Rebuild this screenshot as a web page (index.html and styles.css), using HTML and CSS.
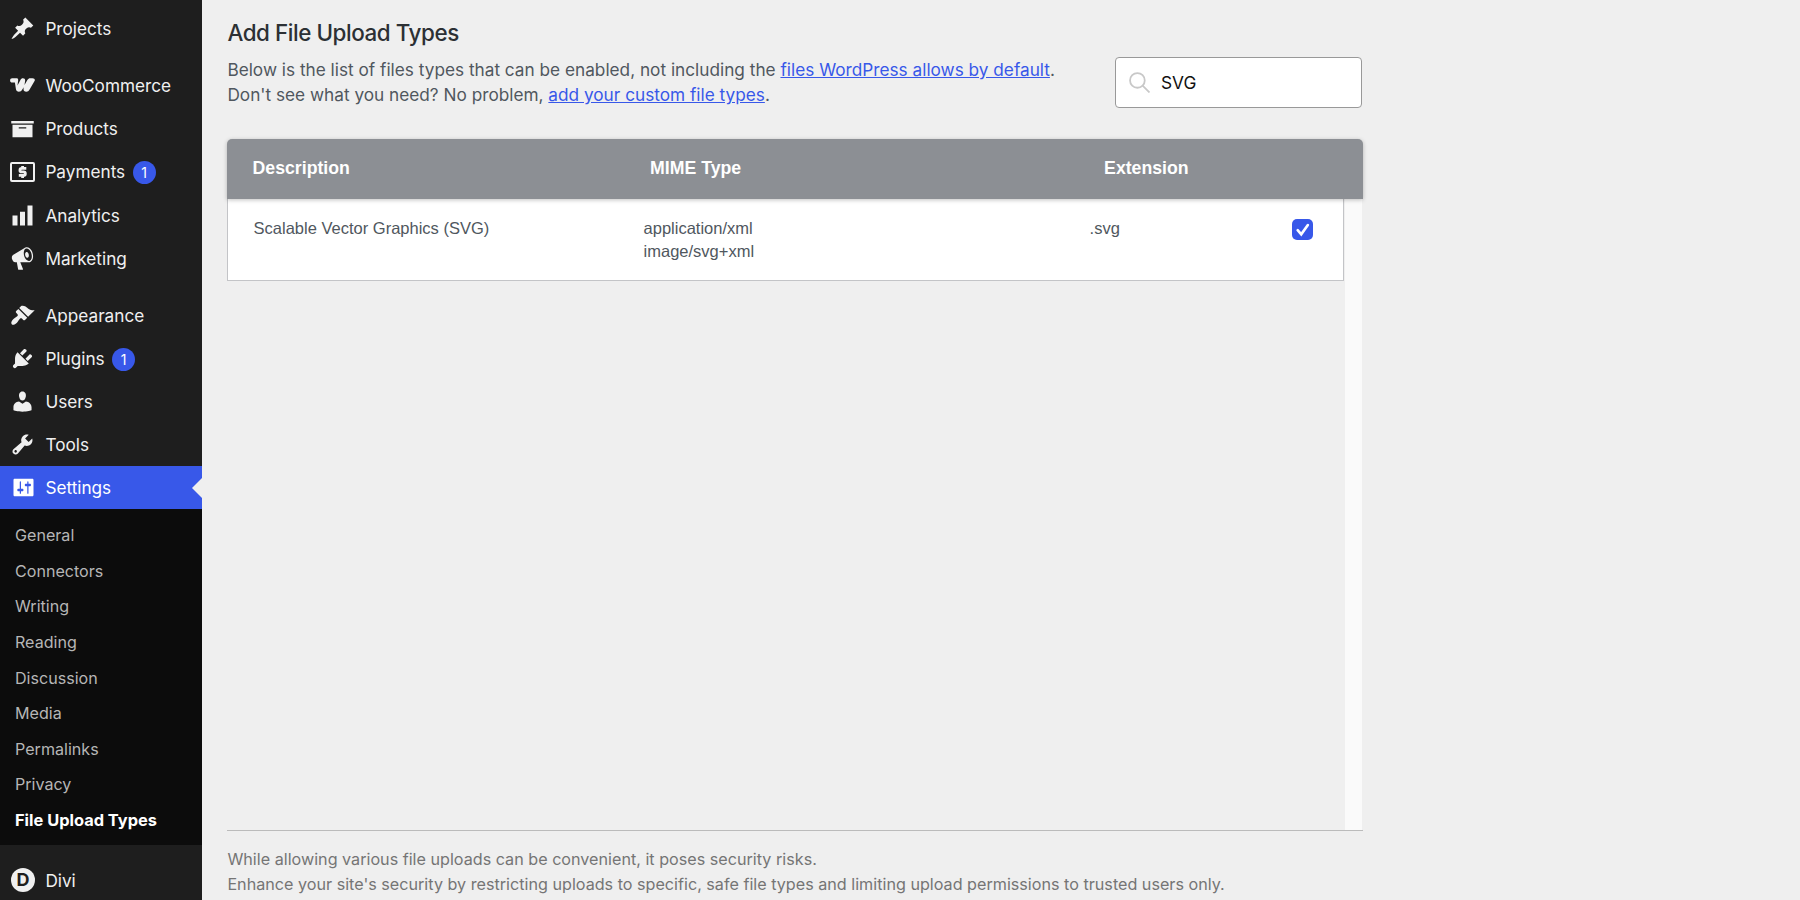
FILE: index.html
```html
<!DOCTYPE html>
<html lang="en">
<head>
    <meta charset="UTF-8">
    <title>Add File Upload Types</title>
    <link rel="stylesheet" href="styles.css">
</head>
<body>
    <div class="wrapper">
        <nav class="sidebar">
            <ul class="menu">
                <li><a href="#"><svg class="icon" viewBox="0 0 20 20"><path d="M10.44 3.02l1.82-1.82 6.36 6.35-1.83 1.82c-1.05-.68-2.48-.57-3.41.36l-.75.75c-.92.93-1.04 2.35-.35 3.41l-1.83 1.82-2.41-2.41-2.8 2.79c-.42.42-3.38 2.71-3.8 2.29s1.86-3.39 2.28-3.81l2.79-2.79L4.1 9.36l1.83-1.82c1.05.69 2.48.57 3.4-.36l.75-.75c.93-.92 1.05-2.35.36-3.41z"/></svg>Projects</a></li>
                <li class="separator"></li>
                <li><a href="#"><svg class="icon icon-woo" viewBox="0 0 25 14"><path d="M2.2.2h4.300c1.500 0 1.900 1 1.600 2.500L7.500 7.500l2.800-5.300C11 .8 11.800.2 12.900.2c1.800 0 2.500 1.200 2.200 2.900l-.6 3.900 3-5.200C18.200.7 19 .2 20.200.2h2.300c2.100 0 2.900 1.400 1.900 3.100l-4.800 8.200c-.9 1.500-1.900 2.200-3.300 2.200-1.900 0-2.900-1.200-2.800-3l.1-1.500-1.300 2.300c-.9 1.500-1.900 2.200-3.400 2.200-1.600 0-2.700-.9-3-2.700L4.900 4.600H2.300C.9 4.600.1 3.700.1 2.400.1 1.100.9.200 2.200.2z"/></svg>WooCommerce</a></li>
                <li><a href="#"><svg class="icon" viewBox="0 0 20 20"><path d="M19 4v2H1V4h18zM2 7h16v10H2V7zm11 3V9H7v1h6z"/></svg>Products</a></li>
                <li><a href="#"><svg class="icon icon-pay" viewBox="0 0 25 20"><path fill-rule="evenodd" d="M2 0h21a2 2 0 0 1 2 2v16a2 2 0 0 1-2 2H2a2 2 0 0 1-2-2V2a2 2 0 0 1 2-2zm0 2v16h21V2z"/><path class="dollar" d="M16.300 6.400h-4.600a1.700 1.700 0 0 0 0 3.500h1.900a1.700 1.700 0 0 1 0 3.500H8.800M12.600 4v2.500M12.600 13.500V16"/></svg>Payments<span class="badge">1</span></a></li>
                <li><a href="#"><svg class="icon" viewBox="0 0 20 20"><path d="M18 18V2h-4v16h4zm-6 0V7H8v11h4zm-6 0v-8H2v8h4z"/></svg>Analytics</a></li>
                <li><a href="#"><svg class="icon" viewBox="0 0 20 20"><path d="M18.150 5.940c.46 1.620.38 3.220-.02 4.480-.42 1.280-1.260 2.180-2.300 2.480-.16.06-.26.06-.4.06-.06.02-.12.02-.18.02-.06.02-.14.02-.22.02h-6.800l2.220 5.500c.02.14-.06.26-.14.34-.08.1-.24.16-.34.16H6.950c-.1 0-.26-.06-.34-.16-.08-.08-.16-.2-.14-.34l-1-5.500H4.250l-.02-.02c-.5.06-1.080-.18-1.540-.62s-.88-1.080-1.060-1.880c-.24-.8-.2-1.560-.02-2.200.18-.62.58-1.080 1.060-1.300l.02-.02 9-5.400c.1-.06.18-.1.24-.16.06-.04.14-.08.24-.12.16-.08.28-.12.5-.18 1.040-.3 2.240.1 3.220.98s1.840 2.240 2.260 3.860zm-2.580 5.980h-.02c.4-.1.74-.34 1.040-.7.58-.7.86-1.760.86-3.040 0-.64-.1-1.300-.28-1.980-.34-1.360-1.020-2.500-1.780-3.240s-1.680-1.100-2.460-.88c-.82.22-1.400.96-1.700 2-.32 1.040-.28 2.360.06 3.720.38 1.360 1 2.500 1.800 3.240.78.74 1.620 1.100 2.480.88zm-2.540-7.080c.22-.04.42-.02.62.04.38.16.76.48 1.020 1s.42 1.200.42 1.780c0 .3-.04.56-.12.8-.18.48-.44.84-.86.94-.34.1-.8-.06-1.140-.4s-.64-.86-.78-1.500c-.18-.62-.12-1.240.02-1.720s.48-.84.82-.94z"/></svg>Marketing</a></li>
                <li class="separator"></li>
                <li><a href="#"><svg class="icon" viewBox="0 0 20 20"><path d="M14.480 11.060L7.410 3.990l1.500-1.500c.5-.56 2.300-.47 3.510.32 1.210.8 1.430 1.280 2.910 2.100 1.180.64 2.450 1.260 4.450.85zm-.71.71L6.700 4.700 4.930 6.470c-.39.39-.39 1.020 0 1.410l1.060 1.060c.39.39.39 1.030 0 1.420-.6.6-1.430 1.110-2.210 1.690-.35.26-.7.53-1.010.84C1.430 14.230.4 16.080 1.400 17.070c.99 1 2.840-.03 4.180-1.360.31-.31.58-.66.85-1.020.57-.78 1.080-1.610 1.690-2.210.39-.39 1.020-.39 1.410 0l1.060 1.060c.39.39 1.020.39 1.410 0z"/></svg>Appearance</a></li>
                <li><a href="#"><svg class="icon" viewBox="0 0 20 20"><path d="M13.110 4.360L9.870 7.600 8 5.730l3.240-3.240c.35-.34 1.050-.2 1.560.32.52.51.66 1.210.31 1.550zm-8 1.770l.91-1.120 9.010 9.010-1.190.84c-.71.71-2.630 1.160-3.820 1.160H6.140L4.900 17.260c-.59.59-1.540.59-2.120 0-.59-.58-.59-1.530 0-2.120l1.240-1.240v-3.880c0-1.130.4-3.190 1.090-3.890zm7.260 3.970l3.240-3.240c.34-.35 1.040-.21 1.550.31.52.51.66 1.210.31 1.550l-3.240 3.250z"/></svg>Plugins<span class="badge">1</span></a></li>
                <li><a href="#"><svg class="icon" viewBox="0 0 20 20"><path d="M10 9.250c-2.270 0-2.730-3.440-2.730-3.440C7 4.020 7.820 2 9.970 2c2.160 0 2.980 2.020 2.710 3.810 0 0-.41 3.440-2.680 3.440zm0 2.570L12.720 10c2.390 0 4.520 2.330 4.520 4.530v2.490s-3.650 1.130-7.240 1.130c-3.650 0-7.240-1.130-7.240-1.130v-2.490c0-2.250 1.940-4.480 4.470-4.480z"/></svg>Users</a></li>
                <li><a href="#"><svg class="icon" viewBox="0 0 20 20"><path d="M16.680 9.770c-1.340 1.340-3.300 1.670-4.950.99l-5.410 6.520c-.99.99-2.590.99-3.580 0s-.99-2.590 0-3.570l6.520-5.420c-.68-1.650-.35-3.610.99-4.950 1.280-1.280 3.120-1.620 4.720-1.060l-2.890 2.890 2.820 2.820 2.860-2.870c.53 1.580.18 3.390-1.080 4.650zM3.810 16.210c.4.39 1.040.39 1.430 0 .4-.4.4-1.040 0-1.430-.39-.4-1.030-.4-1.430 0-.39.39-.39 1.030 0 1.430z"/></svg>Tools</a></li>
                <li class="current"><a href="#"><svg class="icon" viewBox="0 0 20 20"><path d="M18 16V4c0-.55-.45-1-1-1H3c-.55 0-1 .45-1 1v12c0 .55.45 1 1 1h14c.55 0 1-.45 1-1zM8 11h1c.55 0 1 .45 1 1s-.45 1-1 1H8v1.500c0 .28-.22.5-.5.5s-.5-.22-.5-.5V13H6c-.55 0-1-.45-1-1s.45-1 1-1h1V5.500c0-.28.22-.5.5-.5s.5.22.5.5V11zm5-2h-1c-.55 0-1-.45-1-1s.45-1 1-1h1V5.500c0-.28.22-.5.5-.5s.5.22.5.5V7h1c.55 0 1 .45 1 1s-.45 1-1 1h-1v5.500c0 .28-.22.5-.5.5s-.5-.22-.5-.5V9z"/></svg>Settings</a></li>
            </ul>
            <ul class="submenu">
                <li><a href="#">General</a></li>
                <li><a href="#">Connectors</a></li>
                <li><a href="#">Writing</a></li>
                <li><a href="#">Reading</a></li>
                <li><a href="#">Discussion</a></li>
                <li><a href="#">Media</a></li>
                <li><a href="#">Permalinks</a></li>
                <li><a href="#">Privacy</a></li>
                <li><a href="#" class="active">File Upload Types</a></li>
            </ul>
            <ul class="menu">
                <li class="separator"></li>
                <li><a href="#"><span class="icon divi-logo">D</span>Divi</a></li>
            </ul>
        </nav>

        <main class="content">
            <header class="page-header">
                <div class="intro">
                    <h1>Add File Upload Types</h1>
                    <p>Below is the list of files types that can be enabled, not including the <a href="#">files WordPress allows by default</a>.<br>
                    Don't see what you need? No problem, <a href="#">add your custom file types</a>.</p>
                </div>
                <div class="search">
                    <svg viewBox="0 0 20 20"><circle cx="8" cy="8" r="7"/><path d="M13 13l6.500 6.500"/></svg>
                    <input type="text" value="SVG">
                </div>
            </header>

            <div class="table">
                <div class="table-head">
                    <span>Description</span>
                    <span>MIME Type</span>
                    <span>Extension</span>
                </div>
                <div class="table-body">
                    <div class="rows">
                        <div class="row">
                            <span>Scalable Vector Graphics (SVG)</span>
                            <span>application/xml<br>image/svg+xml</span>
                            <span>.svg</span>
                            <span class="checkbox"><svg viewBox="0 0 20 20"><path d="M5.400 10.600l3.400 4 6.300-8.800"/></svg></span>
                        </div>
                    </div>
                    <div class="scroll-track"></div>
                </div>
            </div>

            <p class="note">While allowing various file uploads can be convenient, it poses security risks.<br>
            Enhance your site's security by restricting uploads to specific, safe file types and limiting upload permissions to trusted users only.</p>
        </main>
    </div>
</body>
</html>
```

FILE: styles.css
```css
* {
    box-sizing: border-box;
}

body {
    margin: 0;
    height: 900px;
    overflow: hidden;
    background: #efefef;
    font-family: Inter, "Liberation Sans", sans-serif;
}

.wrapper {
    display: flex;
    height: 900px;
}

ul {
    list-style: none;
    margin: 0;
    padding: 0;
}

/* sidebar */
.sidebar {
    flex: none;
    width: 202px;
    height: 900px;
    padding-top: 6.6px;
    overflow: hidden;
    background: #1e1e1e;
}

.menu a {
    display: flex;
    align-items: center;
    height: 43.2px;
    padding: 0.6px 0 0 10.4px;
    color: #f0f0f0;
    font-size: 17.2px;
    text-decoration: none;
}

.separator {
    height: 13.8px;
}

.icon {
    flex: none;
    width: 25px;
    height: 25px;
    margin-right: 10px;
    fill: #f0f0f0;
}

.icon-woo {
    height: 14px;
}

.icon-pay {
    height: 20px;
}

.dollar {
    fill: none;
    stroke: #f0f0f0;
    stroke-width: 2.8;
}

.badge {
    width: 23px;
    height: 23px;
    margin: 2px 0 0 7.5px;
    border-radius: 50%;
    background: #3858e9;
    color: #fff;
    font-size: 14px;
    line-height: 23px;
    text-align: center;
}

.current {
    position: relative;
    background: #3858e9;
}

.current a {
    padding-left: 11px;
    color: #fff;
}

.current .icon {
    margin-right: 9.4px;
    fill: #fff;
}

.current::after {
    content: "";
    position: absolute;
    top: 12px;
    right: 0;
    border: 10px solid transparent;
    border-left: none;
    border-right-color: #efefef;
}

.submenu {
    padding: 7.6px 0;
    background: #0c0c0c;
}

.submenu a {
    display: flex;
    align-items: center;
    height: 35.6px;
    padding: 1.2px 0 0 15px;
    color: #b6b6b6;
    font-size: 16.1px;
    text-decoration: none;
}

.submenu .active {
    color: #fff;
    font-size: 16.4px;
    font-weight: 700;
}

.divi-logo {
    width: 24px;
    height: 24px;
    margin-left: 0.6px;
    margin-right: 10.4px;
    border-radius: 50%;
    background: #f0f0f0;
    color: #1e1e1e;
    font-size: 18px;
    font-weight: 700;
    line-height: 24px;
    text-align: center;
}

/* content */
.content {
    width: 1161px;
    padding: 18px 0 0 25.4px;
}

.page-header {
    display: flex;
    justify-content: space-between;
    height: 121px;
}

.intro h1 {
    margin: 0;
    color: #2c3034;
    font-size: 22.4px;
    font-weight: 500;
    line-height: 30px;
    letter-spacing: -0.43px;
}

.intro p {
    margin: 9px 0 0;
    color: #50575e;
    font-size: 17.23px;
    line-height: 25.4px;
}

.intro a {
    color: #3858e9;
}

.search {
    display: flex;
    align-items: center;
    width: 247px;
    height: 51px;
    margin: 39px 1px 0 0;
    padding-left: 13px;
    border: 1px solid #999;
    border-radius: 4px;
    background: #fff;
}

.search svg {
    width: 21px;
    height: 21px;
    fill: none;
    stroke: #c8c8c8;
    stroke-width: 1.7;
}

.search input {
    width: 190px;
    padding: 0 0 0 11px;
    border: none;
    outline: none;
    background: none;
    color: #111;
    font: 17.3px Inter, "Liberation Sans", sans-serif;
}

.table {
    font-family: "Liberation Sans", Arial, sans-serif;
}

.table-head {
    display: grid;
    grid-template-columns: 397.5px 454px 1fr;
    align-items: center;
    position: relative;
    height: 60px;
    padding: 0 0 1px 25.2px;
    border-radius: 5px 5px 0 0;
    background: #8c8f94;
    box-shadow: 0 1px 4px rgba(0, 0, 0, 0.25);
    color: #fff;
    font-size: 17.7px;
    font-weight: 700;
}

.table-body {
    display: flex;
    height: 632px;
    border-bottom: 1px solid #bbb;
}

.rows {
    width: 1117px;
}

.row {
    display: grid;
    grid-template-columns: 390px 446px 202px 21px;
    height: 82px;
    padding: 18px 0 0 25.2px;
    border: 1px solid #c3c4c7;
    border-top: none;
    background: #fff;
    color: #50575e;
    font-size: 16.5px;
    line-height: 23px;
}

.checkbox {
    width: 21px;
    height: 21px;
    margin-top: 2px;
    border-radius: 5px;
    background: #3858e9;
}

.checkbox svg {
    display: block;
    fill: none;
    stroke: #fff;
    stroke-width: 2.5;
    stroke-linecap: round;
}

.scroll-track {
    width: 17px;
    margin-left: 1px;
    background: #fafafa;
}

.note {
    margin: 16px 0 0;
    color: #757575;
    font-size: 16.17px;
    line-height: 25.4px;
    white-space: nowrap;
}
```
